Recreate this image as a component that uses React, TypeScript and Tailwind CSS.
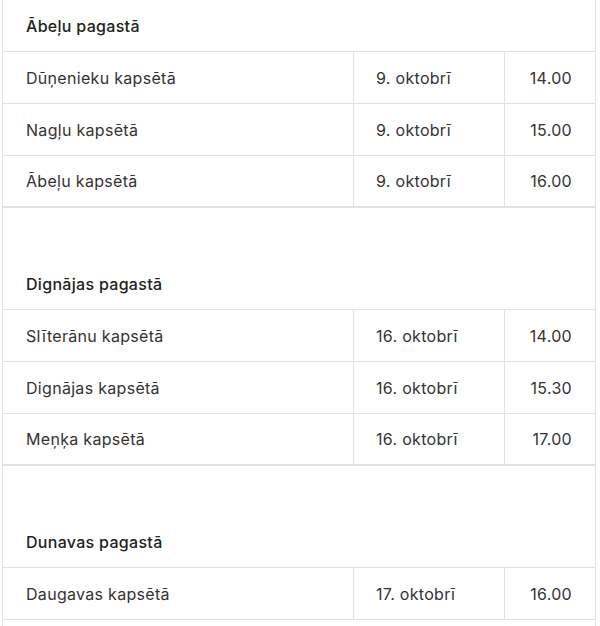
import React from 'react'

type Row = { place: string; date: string; time: string }
type Section = { title: string; rows: Row[] }

const sections: Section[] = [
  {
    title: 'Ābeļu pagastā',
    rows: [
      { place: 'Dūņenieku kapsētā', date: '9. oktobrī', time: '14.00' },
      { place: 'Nagļu kapsētā', date: '9. oktobrī', time: '15.00' },
      { place: 'Ābeļu kapsētā', date: '9. oktobrī', time: '16.00' },
    ],
  },
  {
    title: 'Dignājas pagastā',
    rows: [
      { place: 'Slīterānu kapsētā', date: '16. oktobrī', time: '14.00' },
      { place: 'Dignājas kapsētā', date: '16. oktobrī', time: '15.30' },
      { place: 'Meņķa kapsētā', date: '16. oktobrī', time: '17.00' },
    ],
  },
  {
    title: 'Dunavas pagastā',
    rows: [{ place: 'Daugavas kapsētā', date: '17. oktobrī', time: '16.00' }],
  },
]

const App = () => {
  return (
    <div className="bg-white w-[600px] h-[626px] overflow-hidden font-['Inter',sans-serif] text-[16px] tracking-[0.3px] text-[#333333]">
      <div className="ml-[2px] w-[594px] border-x border-[#dee2e6]">
        {sections.map((s, si) => (
          <div key={s.title}>
            {si > 0 && <div className="h-[50px]" />}
            <div className="h-[52px] border-b border-[#dee2e6] flex items-center pl-[23px] font-medium text-[#222222]">
              {s.title}
            </div>
            {s.rows.map((r, ri) => (
              <div
                key={r.place}
                className={
                  ri === s.rows.length - 1 && si < sections.length - 1
                    ? 'flex h-[52px] border-b-2 border-[#dee2e6]'
                    : 'flex h-[52px] border-b border-[#dee2e6]'
                }
              >
                <div className="w-[350px] flex items-center pl-[23px]">{r.place}</div>
                <div className="w-[151px] border-l border-[#dee2e6] flex items-center pl-[22px]">{r.date}</div>
                <div className="flex-1 border-l border-[#dee2e6] flex items-center justify-end pr-[23px]">{r.time}</div>
              </div>
            ))}
          </div>
        ))}
        <div className="h-[20px]" />
      </div>
    </div>
  )
}

export default App
